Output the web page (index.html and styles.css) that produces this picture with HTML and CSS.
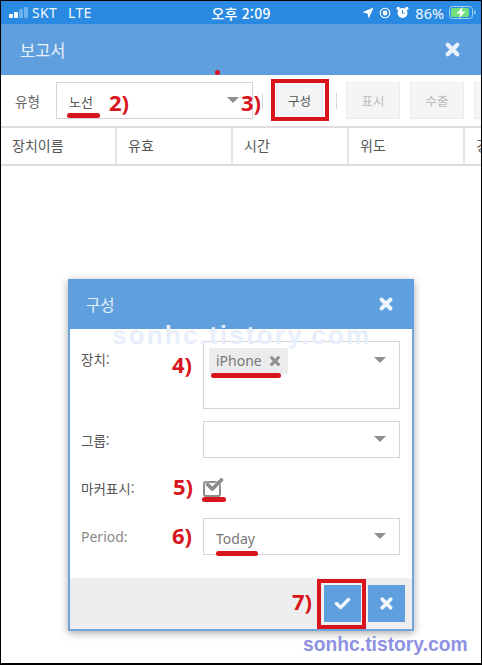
FILE: index.html
```html
<!DOCTYPE html>
<html lang="ko">
<head>
    <meta charset="UTF-8">
    <meta name="viewport" content="width=device-width, initial-scale=1.0">
    <title>보고서</title>
    <link rel="stylesheet" href="styles.css">
</head>
<body>

<svg class="icon-defs" aria-hidden="true">
    <symbol id="icon-x" viewBox="0 0 16 16">
        <path d="M3.5 3.5 12.5 12.5M12.5 3.5 3.5 12.5" fill="none" stroke="currentColor" stroke-width="4" stroke-linecap="round"/>
    </symbol>
    <symbol id="icon-check" viewBox="0 0 18 14">
        <path d="M2.5 7 7 11.3 15.5 2.7" fill="none" stroke="currentColor" stroke-width="3.6" stroke-linecap="round" stroke-linejoin="round"/>
    </symbol>
</svg>

<div class="screen">
    <!-- Status bar -->
    <div class="status-bar">
        <div class="status-left">
            <span class="signal"><i class="on s1"></i><i class="on s2"></i><i class="s3"></i><i class="s4"></i></span>
            <span>SKT</span>
            <span class="lte">LTE</span>
        </div>
        <div class="status-time">오후 2:09</div>
        <div class="status-right">
            <svg class="st-icon" width="12" height="12" viewBox="0 0 12 12"><path d="M11.5.5 6.8 11.5 5.4 6.6.5 5.2z" fill="#fff"/></svg>
            <svg class="st-icon" width="12" height="12" viewBox="0 0 12 12"><circle cx="6" cy="6" r="4.8" fill="none" stroke="#fff" stroke-width="1.1"/><circle cx="6" cy="6" r="2.4" fill="#fff"/></svg>
            <svg class="st-icon" width="13" height="13" viewBox="0 0 13 13"><circle cx="6.5" cy="7" r="5" fill="#fff"/><circle cx="2.2" cy="2.4" r="1.7" fill="#fff"/><circle cx="10.8" cy="2.4" r="1.7" fill="#fff"/><path d="M6.5 4v3.2h2" fill="none" stroke="#2a8ae2" stroke-width="1"/></svg>
            <span class="batt-pct">86%</span>
            <svg class="batt" width="27" height="13" viewBox="0 0 27 13">
                <rect x=".5" y=".5" width="23" height="12" rx="3" fill="none" stroke="#9fd0f2"/>
                <rect x="2" y="2" width="18" height="9" rx="1.5" fill="#6fe07a"/>
                <path d="M14 .5 7.5 7.5h4l-1.5 5 6.5-7h-4z" fill="#fff"/>
                <rect x="25" y="4.5" width="1.5" height="4" rx=".7" fill="#9fd0f2"/>
            </svg>
        </div>
    </div>

    <!-- Page header -->
    <div class="page-header">
        <span>보고서</span>
        <svg class="header-close"><use href="#icon-x"/></svg>
    </div>

    <!-- Toolbar -->
    <div class="toolbar">
        <span class="toolbar-label">유형</span>
        <div class="select toolbar-select"><span class="route-text">노선</span><i class="caret"></i></div>
        <span class="sep sep-a"></span>
        <div class="btn btn-config">구성</div>
        <span class="sep sep-b"></span>
        <div class="btn btn-off">표시</div>
        <div class="btn btn-off">수출</div>
        <div class="btn btn-off"></div>
    </div>

    <!-- Table head -->
    <div class="table-head">
        <div class="th">장치이름</div>
        <div class="th">유효</div>
        <div class="th">시간</div>
        <div class="th">위도</div>
        <div class="th">경도</div>
    </div>

    <!-- Dialog -->
    <div class="dialog">
        <div class="dialog-header">
            <span>구성</span>
            <svg class="dialog-close"><use href="#icon-x"/></svg>
        </div>
        <div class="dialog-body">
            <div class="form-row">
                <label class="row-label row-label-top">장치:</label>
                <div class="select select-tall">
                    <span class="chip">iPhone <svg class="chip-x"><use href="#icon-x"/></svg></span>
                    <i class="caret caret-top"></i>
                </div>
            </div>
            <div class="form-row">
                <label class="row-label">그룹:</label>
                <div class="select"><i class="caret"></i></div>
            </div>
            <div class="form-row form-row-check">
                <label class="row-label">마커표시:</label>
                <div class="checkbox"><svg class="checkbox-mark"><use href="#icon-check"/></svg></div>
            </div>
            <div class="form-row">
                <label class="row-label row-label-dim">Period:</label>
                <div class="select"><span class="today-text">Today</span><i class="caret"></i></div>
            </div>
        </div>
        <div class="dialog-footer">
            <div class="action action-ok"><svg class="action-check"><use href="#icon-check"/></svg></div>
            <div class="action"><svg class="action-x"><use href="#icon-x"/></svg></div>
        </div>
    </div>

    <!-- Annotations drawn over the screenshot -->
    <div class="dot"></div>
    <div class="note n2">2)</div>
    <div class="note n3">3)</div>
    <div class="note n4">4)</div>
    <div class="note n5">5)</div>
    <div class="note n6">6)</div>
    <div class="note n7">7)</div>
    <div class="mark u2"></div>
    <div class="mark u4"></div>
    <div class="mark u5"></div>
    <div class="mark u6"></div>
    <div class="red-box box3"></div>
    <div class="red-box box7"></div>
    <div class="watermark wm-faint">sonhc.tistory.com</div>
    <div class="watermark wm-corner">sonhc.tistory.com</div>
</div>

</body>
</html>
```

FILE: styles.css
```css
/* Base */
* {
    box-sizing: border-box;
    margin: 0;
    padding: 0;
}
body {
    font-family: "Noto Sans CJK KR", "Noto Sans", sans-serif;
    background-color: #ffffff;
    color: #555;
}
.icon-defs {
    display: none;
}

.screen {
    position: relative;
    width: 482px;
    height: 665px;
    overflow: hidden;
    background-color: #ffffff;
    border-style: solid;
    border-color: #000;
    border-width: 1px 1px 2px 1px;
}

/* Status bar */
.status-bar {
    height: 23px;
    background-color: #2a8ae2;
    color: #f2f8fe;
    font-size: 13px;
    display: grid;
    grid-template-columns: 1fr auto 1fr;
    align-items: center;
    padding: 0 5px;
}
.status-left {
    display: flex;
    align-items: center;
    gap: 11px;
    font-family: "Noto Sans", sans-serif;
    font-size: 14px;
    letter-spacing: 0.3px;
    padding-left: 3px;
}
.signal {
    display: flex;
    align-items: flex-end;
    gap: 1px;
    height: 11px;
    margin-right: -7px;
}
.signal i {
    width: 4px;
    background-color: #6db2ee;
    border-radius: 1px;
}
.signal i.on {
    background-color: #fff;
}
.s1 { height: 4px; }
.s2 { height: 6px; }
.s3 { height: 9px; }
.s4 { height: 11px; }
.status-time {
    font-size: 14px;
    font-weight: 500;
    color: #fff;
    letter-spacing: 0.2px;
}
.status-right {
    display: flex;
    align-items: center;
    justify-content: flex-end;
    gap: 5px;
}
.batt-pct {
    font-family: "Noto Sans", sans-serif;
    font-size: 14.5px;
    margin-left: 1px;
}

/* Page header */
.page-header {
    height: 51px;
    background-color: #5f9fdd;
    color: #e8f1fa;
    font-size: 16.5px;
    display: flex;
    align-items: center;
    justify-content: space-between;
    padding: 0 20px 0 19px;
}
.header-close {
    width: 17px;
    height: 17px;
    color: #e9f2fb;
}

/* Toolbar */
.toolbar {
    height: 51px;
    display: flex;
    align-items: center;
    padding-left: 14px;
    font-size: 13.5px;
}
.toolbar-label {
    flex: none;
    width: 41px;
    color: #666;
}
.select {
    position: relative;
    flex: 1;
    height: 37px;
    border: 1px solid #d5d5d5;
    background-color: #fff;
}
.toolbar-select {
    flex: none;
    width: 197px;
    color: #555;
    font-size: 13px;
    padding: 9px 0 0 12px;
}
.caret {
    position: absolute;
    top: 14px;
    right: 13px;
    border-style: solid;
    border-width: 6px 6px 0 6px;
    border-color: #8f8f8f transparent transparent transparent;
}
.caret-top {
    top: 15px;
}
.sep {
    flex: none;
    width: 1px;
    height: 16px;
    background-color: #d8d8d8;
}
.sep-a {
    margin: 0 13px 0 9px;
}
.sep-b {
    margin: 0 9px 0 13px;
}
.btn {
    width: 54px;
    height: 37px;
    flex: none;
    margin-right: 10px;
    display: flex;
    align-items: center;
    justify-content: center;
    font-size: 12.5px;
    background-color: #f5f5f5;
    border: 1px solid #ededed;
}
.btn-config {
    width: 47px;
    margin-right: 0;
    color: #555;
}
.btn-off {
    color: #bbb;
}

/* Table head */
.table-head {
    height: 40px;
    display: flex;
    border-top: 2px solid #dedede;
    border-bottom: 2px solid #dedede;
    font-size: 14px;
    color: #555;
}
.th {
    width: 116px;
    flex: none;
    padding: 7px 0 0 11px;
    border-right: 2px solid #e4e4e4;
}

/* Dialog */
.dialog {
    position: absolute;
    left: 67px;
    top: 278px;
    width: 346px;
    height: 352px;
    display: flex;
    flex-direction: column;
    background-color: #fff;
    border: 2px solid #6fa5da;
    border-top: none;
    box-shadow: 0 2px 8px rgba(0, 0, 0, 0.35);
}
.dialog-header {
    height: 50px;
    flex: none;
    margin: 0 -2px;
    background-color: #5f9fdd;
    color: #e8f1fa;
    font-size: 15.5px;
    display: flex;
    align-items: center;
    justify-content: space-between;
    padding: 0 20px 0 18px;
}
.dialog-close {
    width: 16px;
    height: 16px;
    color: #eef5fc;
}
.dialog-body {
    flex: 1;
    padding: 12px 12px 0 11px;
    display: flex;
    flex-direction: column;
    gap: 12px;
}
.form-row {
    display: grid;
    grid-template-columns: 122px 1fr;
    align-items: center;
}
.form-row-check {
    height: 18px;
    margin: 8px 0 10px;
}
.row-label {
    font-size: 13.5px;
    color: #555;
}
.row-label-top {
    align-self: start;
    padding-top: 8px;
}
.row-label-dim {
    font-family: "Noto Sans", sans-serif;
    font-size: 14px;
    color: #8a8a8a;
}
.select-tall {
    height: 68px;
    padding: 5px;
}
.chip {
    display: inline-flex;
    align-items: center;
    gap: 7px;
    height: 26px;
    padding: 0 7px;
    background-color: #ececec;
    color: #777;
    font-family: "Noto Sans", sans-serif;
    font-size: 14px;
}
.chip-x {
    width: 12px;
    height: 12px;
    color: #8f8f8f;
}
.checkbox {
    position: relative;
    width: 18px;
    height: 16px;
    margin-top: 1px;
    border: 2px solid #8c8c8c;
    border-radius: 3px;
    background-color: #fff;
}
.checkbox-mark {
    position: absolute;
    left: 0;
    top: -6px;
    width: 19px;
    height: 15px;
    color: #8c8c8c;
    filter: drop-shadow(0 0 1px #fff);
}
.today-text {
    display: block;
    padding: 10px 0 0 12px;
    font-family: "Noto Sans", sans-serif;
    font-size: 14px;
    color: #777;
}

/* Dialog footer */
.dialog-footer {
    height: 51px;
    flex: none;
    background-color: #eeeeee;
    display: flex;
    justify-content: flex-end;
    align-items: center;
    gap: 7px;
    padding: 0 7px 1px 0;
}
.action {
    width: 37px;
    height: 37px;
    background-color: #5f9fdd;
    display: flex;
    align-items: center;
    justify-content: center;
    color: #f3f8fd;
}
.action-ok {
    box-shadow: 0 0 0 1px #f4f4f4;
}
.action-check {
    width: 17px;
    height: 13px;
}
.action-x {
    width: 15px;
    height: 15px;
}

/* Annotations */
.dot {
    position: absolute;
    left: 214px;
    top: 69px;
    width: 5px;
    height: 5px;
    border-radius: 50%;
    background-color: #d8141c;
}
.note {
    position: absolute;
    font-family: "Noto Sans", sans-serif;
    font-weight: bold;
    font-size: 22px;
    line-height: 24px;
    color: #d8141c;
}
.n2 { left: 108px; top: 89px; }
.n3 { left: 240px; top: 89px; }
.n4 { left: 171px; top: 351px; }
.n5 { left: 172px; top: 473px; }
.n6 { left: 171px; top: 522px; }
.n7 { left: 291px; top: 588px; }
.mark {
    position: absolute;
    height: 5px;
    border-radius: 3px;
    background-color: #d8141c;
}
.u2 { left: 66px; top: 112px; width: 33px; }
.u4 { left: 210px; top: 372px; width: 70px; }
.u5 { left: 201px; top: 496px; width: 24px; }
.u6 { left: 215px; top: 550px; width: 42px; }
.red-box {
    position: absolute;
    border: 4px solid #d8141c;
}
.box3 { left: 270px; top: 78px; width: 58px; height: 42px; }
.box7 { left: 316px; top: 578px; width: 49px; height: 50px; }
.watermark {
    position: absolute;
    font-family: "Liberation Sans", sans-serif;
    font-weight: bold;
    white-space: nowrap;
}
.wm-faint {
    left: 111px;
    top: 319px;
    font-size: 26px;
    letter-spacing: 2.2px;
    color: #e8eefb;
}
.wm-corner {
    left: 302px;
    top: 633px;
    font-size: 19.3px;
    color: #8f92e2;
}
```
